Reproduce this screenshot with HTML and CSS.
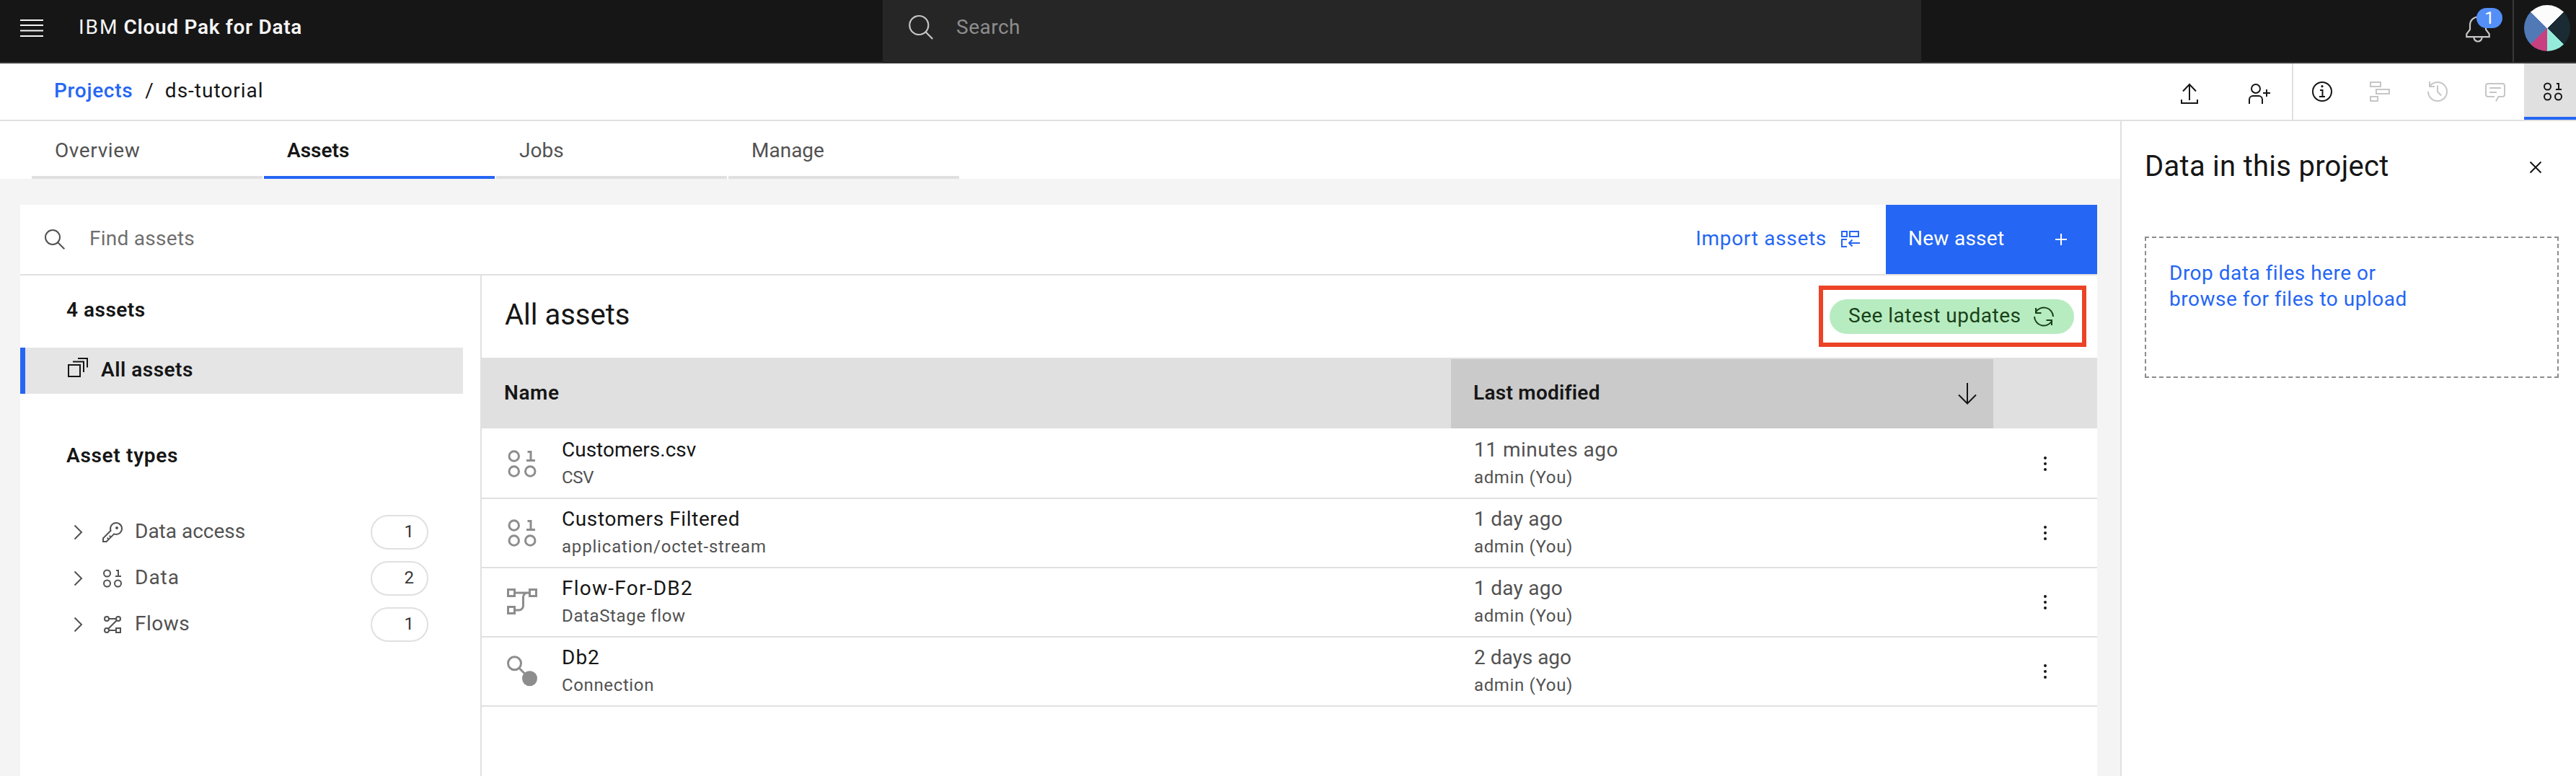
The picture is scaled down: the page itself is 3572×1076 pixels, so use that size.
FILE: index.html
```html
<!DOCTYPE html>
<html lang="en">
<head>
<meta charset="utf-8">
<title>IBM Cloud Pak for Data</title>
<link rel="stylesheet" href="styles.css">
</head>
<body>
<svg class="sprite" aria-hidden="true">
  <symbol id="data" viewBox="0 0 32 32"><g fill="none" stroke="currentColor" stroke-width="2"><circle cx="8.500" cy="9" r="4.500"/><circle cx="8.500" cy="23" r="4.500"/><circle cx="23.500" cy="23" r="4.500"/><path d="M21 5h3v8M20 13h8"/></g></symbol>
  <symbol id="chevron" viewBox="0 0 32 32"><path d="M11.500 6.500l9.500 9.500-9.500 9.500" fill="none" stroke="currentColor" stroke-width="2"/></symbol>
  <symbol id="dots" viewBox="0 0 32 32"><g fill="currentColor"><circle cx="16" cy="8" r="2"/><circle cx="16" cy="16" r="2"/><circle cx="16" cy="24" r="2"/></g></symbol>
</svg>

<header class="header">
  <div class="brand">
    <svg class="menu" viewBox="0 0 32 32"><path d="M0 5h32M0 12h32M0 19.500h32M0 27h32" stroke="#f4f4f4" stroke-width="2"/></svg>
    <div class="title"><span class="ls-wider">IBM</span> <b class="ls-7">Cloud Pak for Data</b></div>
  </div>
  <div class="search">
    <svg viewBox="0 0 40 40"><g fill="none" stroke="#c6c6c6" stroke-width="2.200"><circle cx="18.300" cy="16" r="13"/><path d="M27.500 25.300l9.700 9.700"/></g></svg>
    <span class="search-text ls-5">Search</span>
  </div>
  <div class="account">
    <div class="bell">
      <svg viewBox="0 0 40 40"><g fill="none" stroke="#c6c6c6" stroke-width="2.200"><path d="M4.300 31.200v-4L9 21v-6.500a11 11 0 0 1 22 0V21l4.700 6.200v4z"/><path d="M14.500 32a5.500 5.500 0 0 0 11 0"/></g></svg>
      <span class="badge">1</span>
    </div>
    <div class="avatar-cell"><div class="avatar"></div></div>
  </div>
</header>

<nav class="crumbbar">
  <div class="crumbs"><a class="projects ls-7">Projects</a><span class="slash">/</span><span class="ls-10">ds-tutorial</span></div>
  <div class="actions">
    <svg viewBox="0 0 32 32"><path d="M16 25V3M7 12.500L16 3l9 9.500M5 24v5h22v-5" fill="none" stroke="#161616" stroke-width="2"/></svg>
    <svg viewBox="0 0 32 32"><g fill="none" stroke="#161616" stroke-width="2"><circle cx="12" cy="9" r="6"/><path d="M3 30v-6a5 5 0 0 1 5-5h8a5 5 0 0 1 5 5v6M22 15h10M27 10v10"/></g></svg>
  </div>
  <div class="tools">
    <div class="tool"><svg viewBox="0 0 32 32"><g fill="none" stroke="#161616" stroke-width="2"><circle cx="16" cy="16" r="13"/><path d="M13 14h3.500v9M12 23h8"/></g><circle cx="16" cy="8.700" r="1.600" fill="#161616"/></svg></div>
    <div class="tool off"><svg viewBox="0 0 32 32"><g fill="none" stroke="currentColor" stroke-width="2"><rect x="3" y="3" width="14" height="6"/><rect x="11" y="13" width="18" height="6"/><rect x="3" y="23" width="10" height="6"/></g></svg></div>
    <div class="tool off"><svg viewBox="0 0 32 32"><path d="M3 16a13 13 0 1 0 13-13C11 3 7 5.500 4.500 9.500M5 2v7h7M16 7.500V16l5 5.500" fill="none" stroke="currentColor" stroke-width="2"/></svg></div>
    <div class="tool off"><svg viewBox="0 0 32 32"><path d="M17 29.500l3.500-6.500H26a3 3 0 0 0 3-3V8a3 3 0 0 0-3-3H6a3 3 0 0 0-3 3v12a3 3 0 0 0 3 3h9M8 11h16M8 17h10" fill="none" stroke="currentColor" stroke-width="2"/></svg></div>
    <div class="tool active"><svg><use href="#data"/></svg></div>
  </div>
</nav>

<div class="body">
  <main class="main">
    <div class="tabs">
      <div class="tab ls-6">Overview</div>
      <div class="tab selected">Assets</div>
      <div class="tab">Jobs</div>
      <div class="tab">Manage</div>
    </div>
    <div class="canvas">
      <div class="toolbar">
        <svg viewBox="0 0 32 32"><g fill="none" stroke="#525252" stroke-width="2"><circle cx="13" cy="13" r="10"/><path d="M20.300 20.300l9 9"/></g></svg>
        <span class="find ls-3">Find assets</span>
        <div class="import"><span class="ls-7">Import assets</span>
          <svg viewBox="0 0 32 32"><g fill="none" stroke="#2566f4" stroke-width="2"><rect x="4" y="5" width="7" height="7"/><rect x="15" y="5" width="12" height="7"/><path d="M11 16H4v10h7M14 21h15M18.500 16.500L14 21l4.500 4.500"/></g></svg></div>
        <button class="new"><span class="ls-3">New asset</span><svg viewBox="0 0 32 32"><path d="M8 16h16M16 8v16" stroke="#fff" stroke-width="2"/></svg></button>
      </div>
      <div class="columns">
        <aside class="sidebar">
          <h3 class="count ls-5">4 assets</h3>
          <div class="all ls-5"><svg viewBox="0 0 32 32"><path d="M3 12h16v16H3zM9 7.500h15V22M16 3h13v12.500" fill="none" stroke="#161616" stroke-width="2"/></svg><span>All assets</span></div>
          <h3 class="types ls-7">Asset types</h3>
          <div class="type"><svg class="chev"><use href="#chevron"/></svg><svg viewBox="0 0 32 32"><path fill="currentColor" d="M21,2a8.998,8.998,0,0,0-8.612,11.612L2,24v6H8L18.388,19.612A9,9,0,1,0,21,2Zm0,16a7.012,7.012,0,0,1-2.032-.302L17.821,17.350l-.847.847-3.181,3.181L12.414,20,11,21.414l1.379,1.379-1.586,1.586L9.414,23,8,24.414l1.379,1.379L7.172,28H4V24.828l9.802-9.802.847-.847-.347-1.147A7,7,0,1,1,21,18Z"/><circle cx="22" cy="10" r="2" fill="currentColor"/></svg><span class="label">Data access</span><span class="pill">1</span></div>
          <div class="type"><svg class="chev"><use href="#chevron"/></svg><svg><use href="#data"/></svg><span class="label ls-10">Data</span><span class="pill">2</span></div>
          <div class="type"><svg class="chev"><use href="#chevron"/></svg><svg viewBox="0 0 32 32"><g fill="none" stroke="currentColor" stroke-width="2"><circle cx="8" cy="8" r="3"/><circle cx="24" cy="8" r="3"/><circle cx="8" cy="24" r="3"/><path d="M21 21h6v6h-6zM11 8h10M11 24h10M22 10L10 22"/></g></svg><span class="label ls-5">Flows</span><span class="pill">1</span></div>
        </aside>
        <section class="list">
          <div class="listhead">
            <h2>All assets</h2>
            <div class="callout"><button class="updates"><span class="ls-5">See latest updates</span><svg viewBox="0 0 32 32"><path d="M29 16A13 13 0 0 0 5 9.500M5 4v7h7.500M3 16a13 13 0 0 0 24 6.500M27 28v-7h-7.500" fill="none" stroke="currentColor" stroke-width="2"/></svg></button></div>
          </div>
          <div class="row thead">
            <div class="cell"><span class="ls-6">Name</span></div>
            <div class="cell sorted"><span class="ls-3">Last modified</span><svg viewBox="0 0 32 32"><path d="M16 1v28M4 17.500L16 29.500l12-12" fill="none" stroke="#161616" stroke-width="2"/></svg></div>
            <div class="cell"></div>
          </div>
          <div class="row first">
            <div class="asset"><svg><use href="#data"/></svg><div class="lines"><div class="name">Customers.csv</div><div class="sub ls-0">CSV</div></div></div>
            <div class="lines when"><div class="name ls-5">11 minutes ago</div><div class="sub">admin (You)</div></div>
            <div class="more"><svg><use href="#dots"/></svg></div>
          </div>
          <div class="row">
            <div class="asset"><svg><use href="#data"/></svg><div class="lines"><div class="name ls-6">Customers Filtered</div><div class="sub ls-8">application/octet-stream</div></div></div>
            <div class="lines when"><div class="name ls-3">1 day ago</div><div class="sub">admin (You)</div></div>
            <div class="more"><svg><use href="#dots"/></svg></div>
          </div>
          <div class="row">
            <div class="asset"><svg viewBox="0 0 32 32"><path d="M3 4.300h6v6H3zM23 4.300h6v6h-6zM3 20.400h6v6H3zM10 7.300h12M23 7.300h-2a4 4 0 0 0-4 4v8a4 4 0 0 1-4 4h-3" fill="none" stroke="currentColor" stroke-width="2"/></svg><div class="lines"><div class="name ls-12">Flow-For-DB2</div><div class="sub">DataStage flow</div></div></div>
            <div class="lines when"><div class="name ls-3">1 day ago</div><div class="sub">admin (You)</div></div>
            <div class="more"><svg><use href="#dots"/></svg></div>
          </div>
          <div class="row">
            <div class="asset"><svg viewBox="0 0 32 32"><g stroke="currentColor" stroke-width="2"><circle cx="9" cy="8.500" r="6" fill="none"/><path d="M13 12.700l6 6"/></g><circle cx="23" cy="22.500" r="7" fill="currentColor"/></svg><div class="lines"><div class="name ls-10">Db2</div><div class="sub">Connection</div></div></div>
            <div class="lines when"><div class="name">2 days ago</div><div class="sub">admin (You)</div></div>
            <div class="more"><svg><use href="#dots"/></svg></div>
          </div>
        </section>
      </div>
    </div>
  </main>
  <aside class="panel">
    <div class="panelhead"><h2 class="ls-3">Data in this project</h2><svg viewBox="0 0 32 32"><path d="M8.500 8.500l15 15M23.500 8.500l-15 15" stroke="#161616" stroke-width="2"/></svg></div>
    <div class="drop ls-5">Drop data files here or<br>browse for files to upload</div>
  </aside>
</div>
</body>
</html>
```
FILE: styles.css
```css
* { box-sizing: border-box; }
body { margin: 0; width: 3572px; height: 1076px; overflow: hidden; display: flex; flex-direction: column; background: #fff; color: #161616; font: 28px/36px Roboto, "Noto Sans", sans-serif; white-space: nowrap; }
h2, h3, button { margin: 0; padding: 0; border: 0; font: inherit; }
svg { width: 32px; height: 32px; flex: none; display: block; overflow: visible; }
.sprite { position: absolute; width: 0; height: 0; }

/* tracking */
.ls-0 { letter-spacing: -0.3px; }
.ls-3 { letter-spacing: 0.27px; }
.ls-5 { letter-spacing: 0.5px; }
.ls-6 { letter-spacing: 0.6px; }
.ls-7 { letter-spacing: 0.7px; }
.ls-8 { letter-spacing: 0.82px; }
.ls-10 { letter-spacing: 1px; }
.ls-12 { letter-spacing: 1.25px; }
.ls-wider { letter-spacing: 2px; }

.header { height: 88px; flex: none; display: flex; background: #161616; border-bottom: 2px solid #393939; color: #f4f4f4; }
.brand { width: 1224px; padding: 0 0 8px 28px; display: flex; align-items: center; }
.title { margin-left: 49px; padding-bottom: 3px; }
.title b, .selected, .sidebar h3, .all, .thead { font-weight: 600; }
.search { width: 1440px; height: 87px; padding: 0 0 9px 32px; display: flex; align-items: center; gap: 30px; background: #262626; color: #8d8d8d; }
.search svg { width: 40px; height: 40px; }
.search-text { padding-bottom: 3px; }
.account { flex: 1; display: flex; justify-content: flex-end; }
.bell { position: relative; width: 68px; padding-top: 20px; }
.bell svg { width: 40px; height: 40px; }
.badge { position: absolute; left: 18px; top: 11px; width: 36px; height: 28px; border-radius: 14px; background: #548ff8; color: #fff; font-size: 24px; line-height: 28px; text-align: center; }
.avatar-cell { width: 88px; border-left: 2px solid #393939; padding: 7px 0 0 14px; }
.avatar { width: 64px; height: 64px; border-radius: 50%; background: conic-gradient(#fcfcfc 45deg, #1a2b34 45deg 135deg, #95ebda 135deg 180deg, #c8407f 180deg 225deg, #5079b6 225deg 315deg, #fcfcfc 315deg); }

.crumbbar { height: 80px; flex: none; display: flex; border-bottom: 2px solid #e0e0e0; }
.crumbs { flex: 1; display: flex; align-items: center; padding: 0 0 3px 75px; }
.projects { color: #2566f4; font-weight: 500; }
.slash { margin: 0 16px 0 17px; }
.actions { display: flex; gap: 64px; padding: 26px 30px 0 0; }
.tools { width: 394px; display: flex; border-left: 2px solid #e0e0e0; }
.tool { width: 80px; flex: none; display: flex; align-items: center; justify-content: center; }
.off { color: #c6c6c6; }
.active { width: 72px; padding: 4px 0 0 8px; background: #e0e0e0; border-bottom: 4px solid #2566f4; }

.body { flex: 1; display: flex; min-height: 0; }
.main { flex: 1; display: flex; flex-direction: column; }
.tabs { height: 80px; flex: none; display: flex; gap: 2px; padding-left: 44px; }
.tab { width: 320px; padding: 23px 0 0 32px; border-bottom: 4px solid #e0e0e0; color: #525252; }
.tab.selected { border-color: #2566f4; color: #161616; }
.canvas { flex: 1; display: flex; flex-direction: column; padding: 36px 32px 0 28px; background: #f4f4f4; }
.toolbar { height: 98px; flex: none; display: flex; align-items: center; padding-left: 32px; background: #fff; border-bottom: 2px solid #e0e0e0; }
.find { flex: 1; margin-left: 32px; color: #6f6f6f; padding-bottom: 2px; }
.import { display: flex; align-items: center; gap: 17px; margin-right: 33px; color: #2566f4; }
.import span { padding-bottom: 2px; }
.new { width: 293px; height: 96px; display: flex; align-items: center; justify-content: space-between; padding: 0 34px 0 31px; background: #2566f4; color: #fff; }
.new span { padding-bottom: 2px; }
.columns { flex: 1; display: flex; background: #fff; }

.sidebar { width: 638px; flex: none; padding-top: 30px; }
.sidebar h3 { padding-left: 64px; }
.all { width: 614px; height: 64px; margin: 34px 0 68px; display: flex; align-items: center; gap: 16px; padding: 0 0 3px 57px; border-left: 7px solid #2566f4; background: #e5e5e5; }
.all svg { margin-bottom: 5px; }
.sidebar .types { margin-bottom: 56px; }
.type { height: 64px; display: flex; align-items: center; padding: 0 72px 0 64px; color: #525252; }
.type svg { margin-right: 15px; }
.type .chev { margin-right: 16px; }
.label { flex: 1; padding-bottom: 3px; }
.pill { width: 80px; height: 48px; border: 2px solid #e0e0e0; border-radius: 24px; padding-right: 18px; text-align: right; font-size: 24px; line-height: 42px; color: #393939; }

.list { flex: 1; border-left: 2px solid #e0e0e0; }
.listhead { height: 114px; display: flex; justify-content: space-between; padding: 14px 15px 0 32px; }
.listhead h2 { font-size: 40px; line-height: 50px; margin-top: 16px; }
.callout { width: 371px; height: 85px; border: 6px solid #ec4226; padding: 13px 11px 12px 9px; }
.updates { width: 339px; height: 48px; border-radius: 24px; background: #b7ecc0; color: #194119; display: flex; align-items: center; justify-content: space-between; padding: 0 26px; }
.updates span { padding-bottom: 2px; }
.row { display: grid; grid-template-columns: 1344px 752px 1fr; height: 96px; border-bottom: 2px solid #e0e0e0; }
.first { height: 98px; padding-top: 2px; }
.thead { height: 98px; border-bottom: 0; border-top: 2px solid #e0e0e0; background: #e0e0e0; }
.cell { display: flex; align-items: center; justify-content: space-between; padding: 0 20px 0 31px; }
.cell span { padding-bottom: 3px; }
.sorted { background: #cacaca; }
.asset { display: flex; align-items: center; padding-left: 32px; gap: 31px; }
.asset svg { width: 48px; height: 48px; color: #8d8d8d; }
.lines { align-self: start; padding-top: 9px; }
.when { padding-left: 32px; }
.name { line-height: 37px; }
.when .name { color: #525252; }
.sub { margin-top: 4px; font-size: 24px; line-height: 32px; color: #525252; }
.sub:not(.ls-0):not(.ls-8) { letter-spacing: 0.63px; }
.more { display: flex; align-items: center; justify-content: center; }

.panel { width: 632px; flex: none; border-left: 2px solid #e0e0e0; padding: 0 14px 0 32px; }
.panel { padding-right: 24px; }
.panelhead { height: 160px; display: flex; justify-content: space-between; padding: 38px 16px 0 0; }
.panelhead h2 { font-size: 40px; line-height: 50px; }
.panelhead svg { margin-top: 10px; }
.drop { height: 196px; border: 2px dashed #8d8d8d; padding: 31px 0 0 32px; color: #2566f4; }
```
